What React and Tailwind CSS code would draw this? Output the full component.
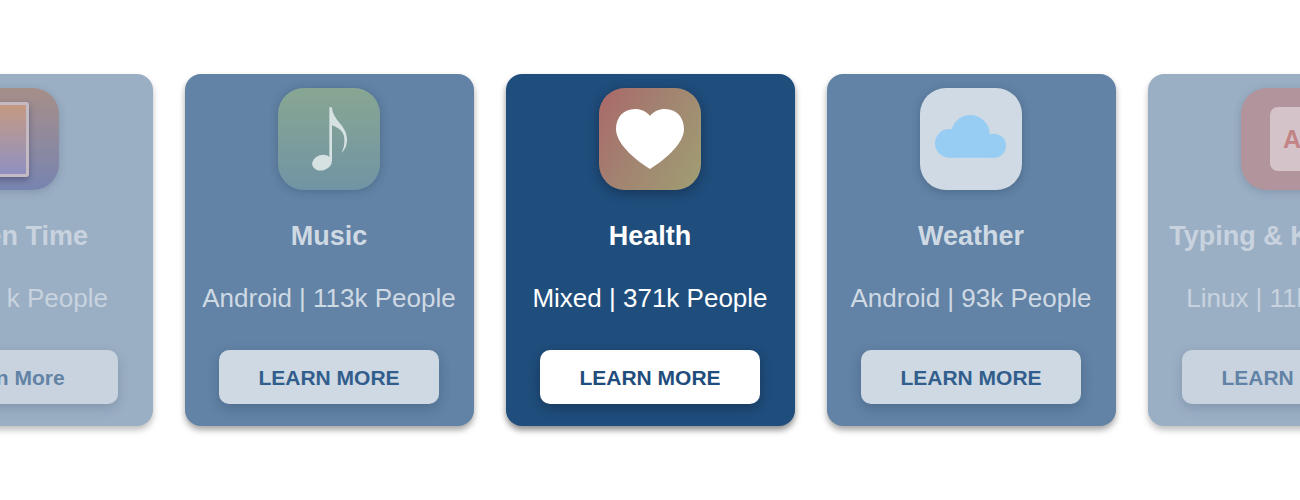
function ScreenTimeIcon() {
  return (
    <div className="flex size-[102px] items-center justify-center rounded-[26px] bg-linear-to-b from-[#a68e88] to-[#7884b0] shadow-[0_2px_8px_rgba(30,50,80,0.2)]">
      <div className="h-[75px] w-[41px] rounded-[3px] border-[3px] border-[#c4bac4] bg-linear-to-b from-[#c69981] to-[#8f90c0] shadow-[0_3px_6px_rgba(40,40,80,0.4)]" />
    </div>
  );
}

function MusicIcon() {
  return (
    <div className="size-[102px] rounded-[26px] bg-linear-to-b from-[#88a692] to-[#7194a4] shadow-[0_1px_8px_rgba(30,50,80,0.3)]">
      <svg viewBox="0 0 306 306" className="size-full" fill="#d6e1e2" aria-hidden="true">
        <ellipse cx="132" cy="224" rx="30" ry="23" transform="rotate(-17 132 224)" />
        <path d="M154 58H162C163 97 207 112 207 154C207 174 200 186 190 195C197 182 200 170 199 152C198 132 183 119 162 112V220H154Z" />
      </svg>
    </div>
  );
}

function HealthIcon() {
  return (
    <div className="size-[102px] rounded-[26px] bg-linear-[120deg,#aa6b69_5%,#a28371_45%,#a09c72_95%] shadow-[0_3px_12px_rgba(0,0,0,0.3)]">
      <svg viewBox="0 0 306 306" className="size-full" fill="#ffffff" aria-hidden="true">
        <path d="M153 84C142 70 126 63 108 63C74 63 51 88 51 123C51 162 98 209 153 243C208 209 255 162 255 123C255 88 232 63 198 63C180 63 164 70 153 84Z" />
      </svg>
    </div>
  );
}

function WeatherIcon() {
  return (
    <div className="size-[102px] rounded-[26px] bg-[#d0dae4] shadow-[0_2px_8px_rgba(30,50,80,0.3)]">
      <svg viewBox="0 0 306 306" className="size-full" fill="#97cdf3" aria-hidden="true">
        <circle cx="88" cy="166" r="43" />
        <circle cx="151" cy="139" r="58" />
        <circle cx="222" cy="173" r="36" />
        <path d="M88 151H222V209H88Z" />
      </svg>
    </div>
  );
}

function TypingIcon() {
  return (
    <div className="flex size-[102px] items-center justify-center rounded-[26px] bg-[#b2949c] shadow-[0_2px_8px_rgba(30,50,80,0.2)]">
      <div className="flex h-16 w-11 items-center justify-center rounded-lg bg-[#d5c3ca] pt-0.5 text-[25px] font-bold text-[#c28585]">
        A
      </div>
    </div>
  );
}

const tones = {
  center: {
    card: "bg-[#1f4d7c] text-white shadow-[0_4px_6px_rgba(0,0,0,0.45)]",
    button: "bg-white text-[#1f4d7c] shadow-[0_4px_12px_rgba(0,0,0,0.25)]",
  },
  side: {
    card: "bg-[#6283a5] text-[#cfd9e4] shadow-[0_4px_6px_rgba(0,0,0,0.35)]",
    button: "bg-[#cfd9e3] text-[#315e8c] shadow-[0_4px_12px_rgba(20,40,70,0.25)]",
  },
  outer: {
    card: "bg-[#9bafc4] text-[#c8d3df] shadow-[0_4px_6px_rgba(0,0,0,0.25)]",
    button: "bg-[#c8d3df] text-[#6283a5] shadow-[0_4px_12px_rgba(30,50,80,0.2)]",
  },
};

const apps = [
  { title: "Screen Time", detail: "iOS | 11 k People", action: "Learn More", tone: "outer", Icon: ScreenTimeIcon },
  { title: "Music", detail: "Android | 113k People", action: "LEARN MORE", tone: "side", Icon: MusicIcon },
  { title: "Health", detail: "Mixed | 371k People", action: "LEARN MORE", tone: "center", Icon: HealthIcon },
  { title: "Weather", detail: "Android | 93k People", action: "LEARN MORE", tone: "side", Icon: WeatherIcon },
  { title: "Typing & Keyboard", detail: "Linux | 11k People", action: "LEARN MORE", tone: "outer", Icon: TypingIcon },
];

function AppCard({ title, detail, action, tone, Icon }) {
  const styles = tones[tone];
  return (
    <article
      className={`flex w-[289px] shrink-0 flex-col items-center rounded-2xl pt-[14px] pb-[22px] whitespace-nowrap ${styles.card}`}
    >
      <Icon />
      <h2 className="mt-[30px] text-[27px] leading-8 font-bold">{title}</h2>
      <p className="mt-[30px] text-[26px] leading-8">{detail}</p>
      <button
        type="button"
        className={`mt-9 h-[54px] w-[220px] rounded-[10px] pt-0.5 text-[21px] font-bold ${styles.button}`}
      >
        {action}
      </button>
    </article>
  );
}

export default function App() {
  return (
    <main className="flex min-h-screen items-center justify-center gap-8 overflow-hidden bg-white font-['Liberation_Sans',Arial,sans-serif]">
      {apps.map((app) => (
        <AppCard key={app.title} {...app} />
      ))}
    </main>
  );
}
